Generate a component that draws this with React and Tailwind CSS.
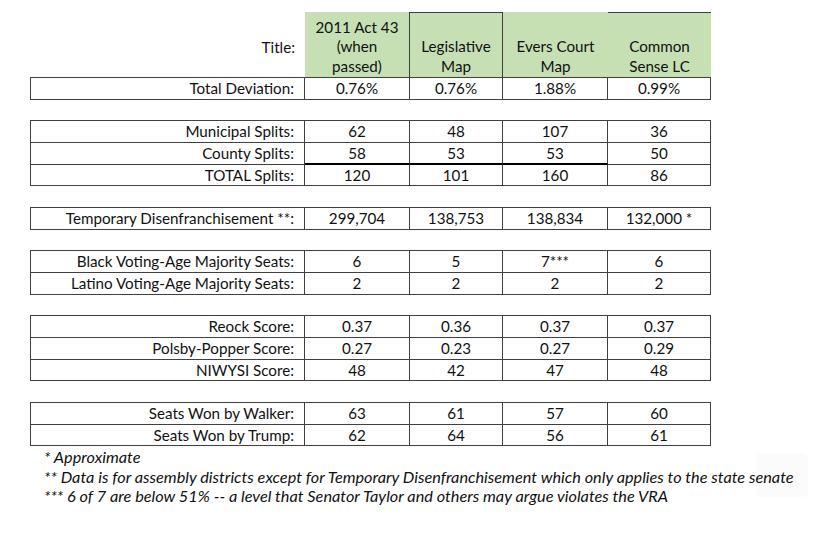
import React from "react";

const groups = [
  [["Total Deviation:", "0.76%", "0.76%", "1.88%", "0.99%"]],
  [
    ["Municipal Splits:", "62", "48", "107", "36"],
    ["County Splits:", "58", "53", "53", "50"],
    ["TOTAL Splits:", "120", "101", "160", "86"],
  ],
  [["Temporary Disenfranchisement **:", "299,704", "138,753", "138,834", "132,000 *"]],
  [
    ["Black Voting-Age Majority Seats:", "6", "5", "7***", "6"],
    ["Latino Voting-Age Majority Seats:", "2", "2", "2", "2"],
  ],
  [
    ["Reock Score:", "0.37", "0.36", "0.37", "0.37"],
    ["Polsby-Popper Score:", "0.27", "0.23", "0.27", "0.29"],
    ["NIWYSI Score:", "48", "42", "47", "48"],
  ],
  [
    ["Seats Won by Walker:", "63", "61", "57", "60"],
    ["Seats Won by Trump:", "62", "64", "56", "61"],
  ],
];

const widths = ["w-[105px]", "w-[93px]", "w-[105px]", "w-[103px]"];

function Block({ rows, first }) {
  return (
    <div
      className={
        "w-[681px] border-l border-t border-[#404040] " +
        (first ? "" : "mt-[20.67px]")
      }
    >
      {rows.map((r, i) => {
        const thick = r[0] === "County Splits:";
        return (
          <div key={i} className="flex h-[21.67px]">
            <div className="w-[274px] border-r border-b border-[#404040] text-right pr-[10px] leading-[20px]">
              {r[0]}
            </div>
            {r.slice(1).map((v, j) => (
              <div
                key={j}
                className={
                  widths[j] +
                  " border-r border-[#404040] text-center leading-[20px] " +
                  (thick && j < 3
                    ? "border-b-2 border-b-black"
                    : "border-b")
                }
              >
                {v}
              </div>
            ))}
          </div>
        );
      })}
    </div>
  );
}

export default function App() {
  return (
    <div
      className="relative w-[818px] h-[540px] bg-white text-[#111] text-[15.2px] overflow-hidden"
      style={{ fontFamily: "Lato, 'Open Sans', sans-serif" }}
    >
      <div className="absolute left-[755px] top-[453px] w-[53px] h-[44px] rounded-[5px] bg-[#fbfbfb]" />
      <div className="relative pl-[30px] pt-[12px]">
        {/* header */}
        <div className="flex h-[65px]">
          <div className="w-[275px] text-right pr-[10px] flex items-center justify-end pt-[6px]">
            Title:
          </div>
          <div className="w-[105px] bg-[#c6e0b4] border-r border-[#404040] flex flex-col justify-end items-center text-center leading-[19.5px] pb-[1px]">
            <span>2011 Act 43</span>
            <span>(when</span>
            <span>passed)</span>
          </div>
          <div className="w-[93px] bg-[#c6e0b4] border-t border-r border-[#404040] flex flex-col justify-end items-center text-center leading-[19.5px] pb-[1px]">
            <span>Legislative</span>
            <span>Map</span>
          </div>
          <div className="w-[105px] bg-[#c6e0b4] flex flex-col justify-end items-center text-center leading-[19.5px] pb-[1px]">
            <span>Evers Court</span>
            <span>Map</span>
          </div>
          <div className="w-[103px] bg-[#c6e0b4] border-t border-[#404040] flex flex-col justify-end items-center text-center leading-[19.5px] pb-[1px]">
            <span>Common</span>
            <span>Sense LC</span>
          </div>
        </div>
        {groups.map((g, i) => (
          <Block key={i} rows={g} first={i === 0} />
        ))}
        <div className="italic pl-[14px] leading-[19.6px] pt-[1px] text-[16.3px] whitespace-nowrap">
          <div>* Approximate</div>
          <div>
            ** Data is for assembly districts except for Temporary
            Disenfranchisement which only applies to the state senate
          </div>
          <div>
            *** 6 of 7 are below 51% -- a level that Senator Taylor and others
            may argue violates the VRA
          </div>
        </div>
      </div>
    </div>
  );
}
